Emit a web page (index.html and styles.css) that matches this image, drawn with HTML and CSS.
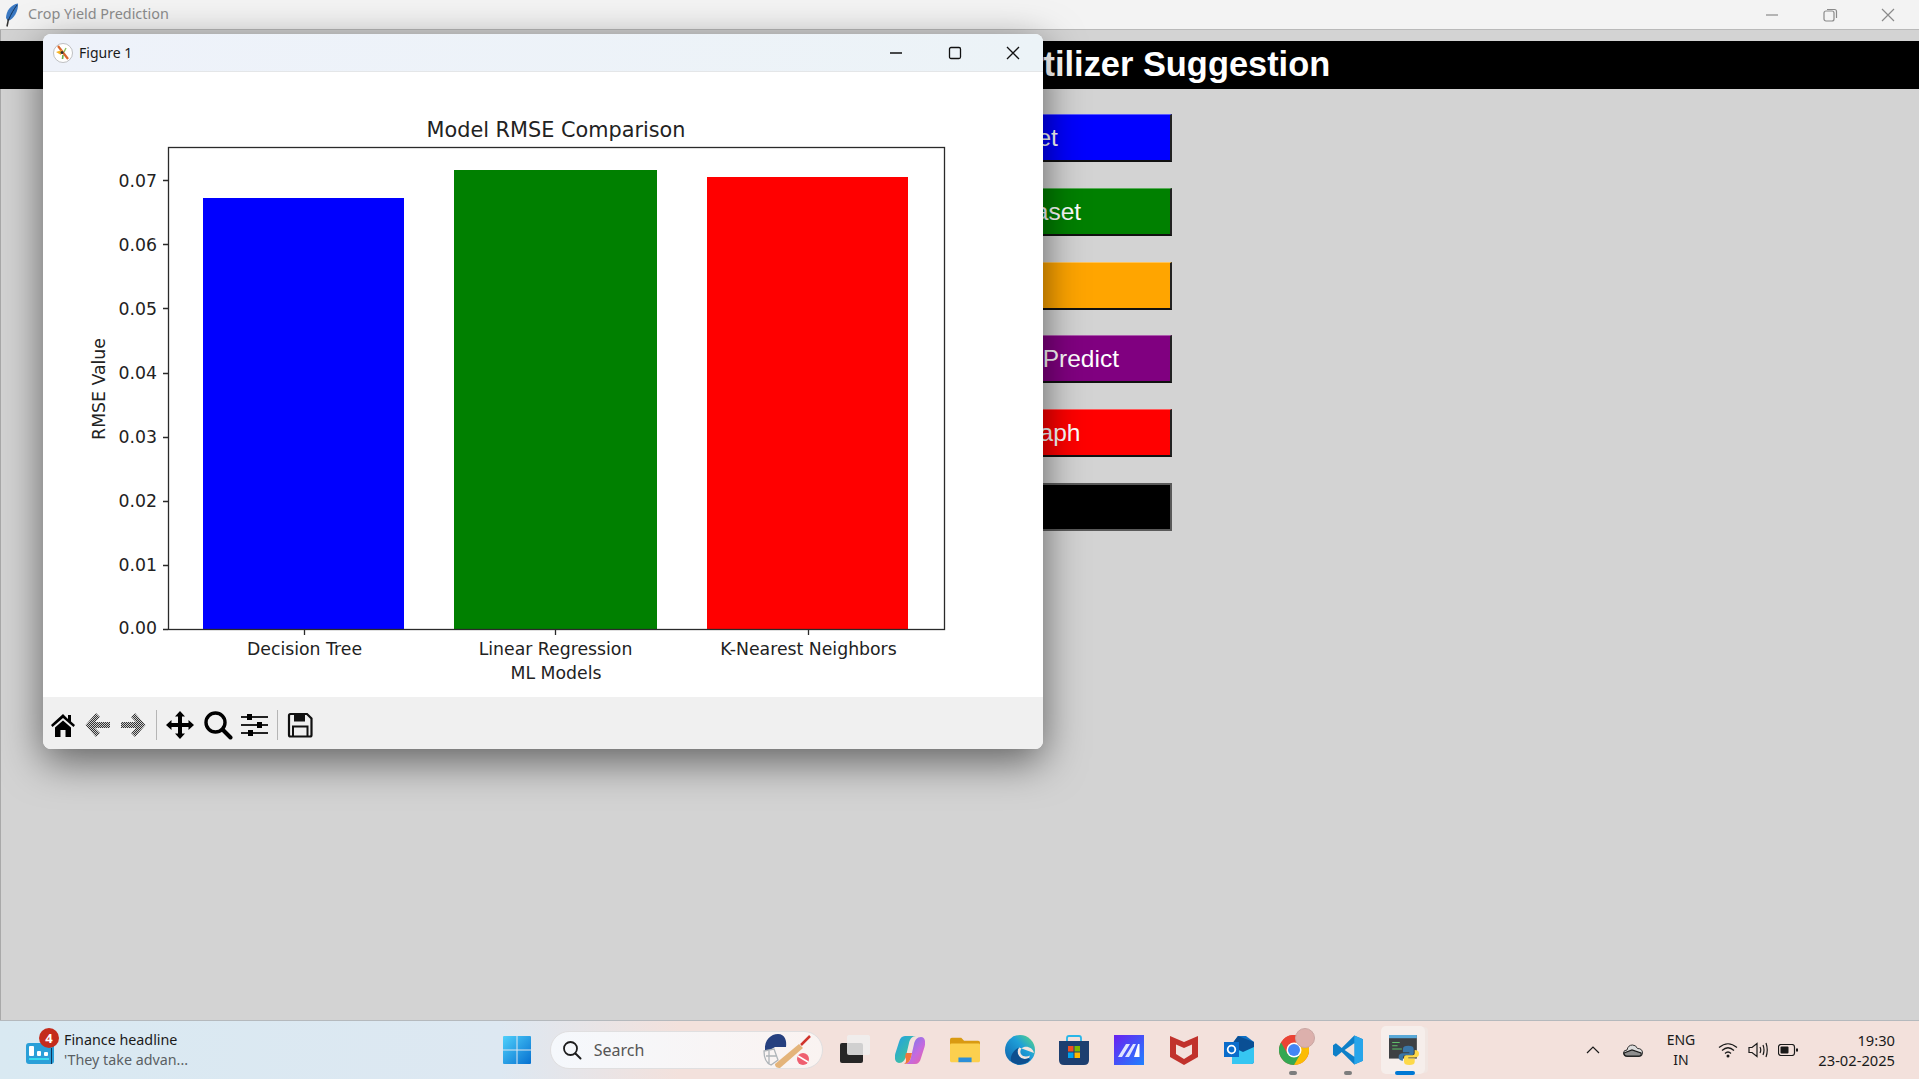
FILE: index.html
```html
<!DOCTYPE html>
<html lang="en">
	<head>
		<meta charset="UTF-8" />
		<meta name="viewport" content="width=device-width, initial-scale=1.0" />
		<title>Crop Yield Prediction</title>
		<link rel="stylesheet" href="styles.css">
	</head>
	<body>
		<!-- Main tkinter window -->
		<div class="app-titlebar">
			<svg class="feather" viewBox="0 0 14 24">
				<path d="M13 0.500C6 1.500 1 8 1 15L3 18C9 16 13.500 8 13 0.500Z" fill="#3a78c2" />
				<path d="M12 2C9 6 6 11 3.500 17" stroke="#16365c" stroke-width="1" fill="none" />
				<path d="M3.500 16L2 23.500" stroke="#333" stroke-width="1.500" fill="none" />
			</svg>
			<span class="app-name">Crop Yield Prediction</span>
			<div class="app-controls">
				<svg viewBox="0 0 16 16"><path d="M2 8H14" /></svg>
				<svg viewBox="0 0 16 16"><rect x="2" y="4" width="10" height="10" rx="2" /><path d="M5 2.500H12.500Q14.500 2.500 14.500 4.500V11" /></svg>
				<svg viewBox="0 0 16 16"><path d="M2 2L14 14M14 2L2 14" /></svg>
			</div>
		</div>

		<div class="app-body">
			<div class="app-header">Crop Yield Prediction and Fertilizer Suggestion</div>
			<div class="actions">
				<button class="action blue">Upload Dataset</button>
				<button class="action green">Preprocess Dataset</button>
				<button class="action orange">Split Data</button>
				<button class="action purple">Train ML Models to Predict</button>
				<button class="action red">Show RMSE Graph</button>
				<button class="action black">Exit</button>
			</div>

			<!-- Matplotlib window on top -->
			<div class="figure-window">
				<div class="figure-titlebar">
					<svg class="figure-icon" viewBox="0 0 20 20">
						<circle cx="10" cy="10" r="9.500" fill="#fff" stroke="#999" stroke-width="0.600" />
						<path d="M5 3L15 16" stroke="#d9652a" stroke-width="2.200" />
						<path d="M3 9L9 7L8 12Z" fill="#f5b324" />
						<path d="M10 12L9.500 16" stroke="#6bb04a" stroke-width="1.600" />
						<path d="M13 5L11 9" stroke="#8fbf5a" stroke-width="1.400" />
						<circle cx="9" cy="9.500" r="1.500" fill="#333" />
					</svg>
					<span class="figure-name">Figure 1</span>
					<div class="figure-controls">
						<svg viewBox="0 0 14 14"><path d="M1 7H13" /></svg>
						<svg viewBox="0 0 14 14"><rect x="1.500" y="1.500" width="11" height="11" rx="1.500" /></svg>
						<svg viewBox="0 0 14 14"><path d="M1 1L13 13M13 1L1 13" /></svg>
					</div>
				</div>

				<svg class="chart" viewBox="43 72 1000 625">
					<rect x="203" y="198" width="201" height="431" fill="#0000ff" />
					<rect x="454" y="170" width="203" height="459" fill="#008000" />
					<rect x="707" y="177" width="201" height="452" fill="#ff0000" />
					<rect x="168.500" y="147.500" width="776" height="482" class="axes" />
					<path class="axes" d="M163 629.500H168M163 565.500H168M163 501.500H168M163 437.500H168M163 373.500H168M163 308.500H168M163 244.500H168M163 180.500H168M304.500 630V635M555.500 630V635M808.500 630V635" />
					<text class="chart-title" x="556" y="136.500">Model RMSE Comparison</text>
					<text class="tick-y" x="157" y="634">0.00</text>
					<text class="tick-y" x="157" y="570.500">0.01</text>
					<text class="tick-y" x="157" y="506.500">0.02</text>
					<text class="tick-y" x="157" y="442.500">0.03</text>
					<text class="tick-y" x="157" y="379">0.04</text>
					<text class="tick-y" x="157" y="315">0.05</text>
					<text class="tick-y" x="157" y="251">0.06</text>
					<text class="tick-y" x="157" y="187">0.07</text>
					<text class="tick-x" x="304.500" y="654.500">Decision Tree</text>
					<text class="tick-x" x="555.500" y="654.500">Linear Regression</text>
					<text class="tick-x" x="808.500" y="654.500">K-Nearest Neighbors</text>
					<text class="tick-x" x="556" y="678.500">ML Models</text>
					<text class="tick-x" transform="translate(105 389) rotate(-90)">RMSE Value</text>
				</svg>

				<div class="figure-toolbar">
					<svg class="tool" viewBox="0 0 26 26">
						<path d="M13 2L1 13L2.500 15L13 6L23.500 15L25 13L21 9.500V3H18V7Z" fill="#000" />
						<path d="M5 15.500L13 8.500L21 15.500V25H15.500V18H10.500V25H5Z" fill="#000" />
					</svg>
					<svg class="tool tool-nudge" viewBox="0 0 26 26">
						<defs>
							<pattern id="dither" width="2" height="2" patternUnits="userSpaceOnUse">
								<rect width="2" height="2" fill="#cfcfcf" />
								<rect width="1" height="1" fill="#333" />
								<rect x="1" y="1" width="1" height="1" fill="#333" />
							</pattern>
						</defs>
						<path d="M11 1L0.500 13L11 25L15 21L10 16H25V10H10L15 5Z" fill="url(#dither)" />
					</svg>
					<svg class="tool tool-nudge" viewBox="0 0 26 26">
						<path d="M15 1L25.500 13L15 25L11 21L16 16H1V10H16L11 5Z" fill="url(#dither)" />
					</svg>
					<span class="tool-sep sep-first"></span>
					<svg class="tool-wide" viewBox="0 0 30 30">
						<path d="M15 1L20 6.500H17V13H23.500V10L29 15L23.500 20V17H17V23.500H20L15 29L10 23.500H13V17H6.500V20L1 15L6.500 10V13H13V6.500H10Z" fill="#000" />
					</svg>
					<svg class="tool-wide" viewBox="0 0 30 30">
						<circle cx="12.500" cy="12.500" r="9.500" fill="none" stroke="#000" stroke-width="3.400" />
						<path d="M19.500 19.500L27.500 27.500" stroke="#000" stroke-width="4" stroke-linecap="round" />
					</svg>
					<svg class="tool-wide" viewBox="0 0 30 30">
						<path d="M0 7H27M0 15H27M0 23H27" stroke="#222" stroke-width="1.800" />
						<rect x="6" y="4" width="5" height="6" fill="#000" />
						<rect x="16" y="12" width="5" height="6" fill="#000" />
						<rect x="7" y="20" width="5" height="6" fill="#000" />
					</svg>
					<span class="tool-sep sep-second"></span>
					<svg class="tool tool-nudge" viewBox="0 0 26 26">
						<path d="M2 3.500Q2 2 3.500 2H20L24.500 6.500V23Q24.500 24.500 23 24.500H3.500Q2 24.500 2 23Z" fill="none" stroke="#111" stroke-width="2.200" />
						<path d="M7 2.500V9.500H18V2.500" fill="#111" />
						<path d="M6 24V14.500H20.500V24" fill="none" stroke="#111" stroke-width="2" />
					</svg>
				</div>
			</div>
		</div>

		<!-- Windows taskbar -->
		<div class="taskbar">
			<div class="news">
				<div class="news-icon">
					<svg viewBox="0 0 28 21">
						<rect width="28" height="21" rx="3" fill="#2a9fd8" />
						<rect x="3" y="3" width="5" height="10" rx="1" fill="#fff" />
						<rect x="11" y="8" width="4" height="5" rx="1" fill="#fff" />
						<rect x="18" y="9" width="4" height="4" rx="1" fill="#fff" />
						<rect x="3" y="15" width="20" height="2" fill="#39dbf0" />
						<rect x="25" y="5" width="1" height="16" fill="#10365c" />
					</svg>
					<span class="news-badge">4</span>
				</div>
				<div class="news-text">
					<div class="news-head">Finance headline</div>
					<div class="news-sub">'They take advan...</div>
				</div>
			</div>

			<div class="task-cell">
				<svg class="task-icon" viewBox="0 0 30 30">
					<defs>
						<linearGradient id="win" x1="0" y1="0" x2="1" y2="1"><stop offset="0" stop-color="#4fd0fb" /><stop offset="1" stop-color="#0670d0" /></linearGradient>
					</defs>
					<path d="M1 2Q1 1 2 1H14.500V14.500H1ZM15.500 1H28Q29 1 29 2V14.500H15.500ZM1 15.500H14.500V29H2Q1 29 1 28ZM15.500 15.500H29V28Q29 29 28 29H15.500Z" fill="url(#win)" />
				</svg>
			</div>

			<div class="search-box">
				<svg class="search-glyph" viewBox="0 0 20 20">
					<circle cx="8.500" cy="8.500" r="6.500" fill="none" stroke="#1c1c1c" stroke-width="1.800" />
					<path d="M13.500 13.500L18.500 18.500" stroke="#1c1c1c" stroke-width="2" stroke-linecap="round" />
				</svg>
				<span class="search-text">Search</span>
				<svg class="search-art" viewBox="0 0 52 36">
					<path d="M4 18C3 8 10 2 17 2C24 2 26 9 25 15L14 15L9 18Z" fill="#26407f" />
					<path d="M3 19L13 17L17 28L10 33C5 31 3 25 3 19ZM5 24H15M8 19V32" fill="none" stroke="#aeb4b8" stroke-width="1.300" />
					<path d="M14 32L38 12L42 16L19 36C16 36 14 35 14 32Z" fill="#e4b47a" />
					<path d="M40 13L49 4" stroke="#d0342c" stroke-width="2.500" />
					<circle cx="42" cy="27" r="6" fill="#ef5f70" />
					<path d="M37 24L47 30" stroke="#fff" stroke-width="1.500" />
				</svg>
			</div>

			<div class="task-cell">
				<svg class="task-icon" viewBox="0 0 30 30">
					<rect x="0" y="8" width="23" height="20" rx="2" fill="#262626" />
					<rect x="7" y="0" width="23" height="20" rx="2" fill="#eeeeee" fill-opacity="0.850" />
				</svg>
			</div>
			<div class="task-cell">
				<svg class="task-icon" viewBox="0 0 30 30">
					<defs>
						<linearGradient id="cop-a" x1="0" y1="0" x2="1" y2="1"><stop offset="0" stop-color="#1f9fe8" /><stop offset="0.700" stop-color="#3fc0a0" /><stop offset="1" stop-color="#b8d83a" /></linearGradient>
						<linearGradient id="cop-b" x1="0" y1="0" x2="1" y2="1"><stop offset="0" stop-color="#5f7cf0" /><stop offset="0.600" stop-color="#c46ae0" /><stop offset="1" stop-color="#f0609a" /></linearGradient>
					</defs>
					<path d="M10 1H21C17 1 15 4 14 8L11 21C10 25 8 28 4 28C0 28 -1 23 0.500 18L4 7C5 3 7 1 10 1Z" fill="url(#cop-a)" />
					<path d="M20 29H9C13 29 15 26 16 22L19 9C20 5 22 2 26 2C30 2 31 7 29.500 12L26 23C25 27 23 29 20 29Z" fill="url(#cop-b)" />
					<path d="M9 29C13 29 15 26 16 22L17 18H11L10 22C12 25 11 28 9 29Z" fill="#f2763c" />
				</svg>
			</div>
			<div class="task-cell">
				<svg class="task-icon" viewBox="0 0 32 30">
					<path d="M0 4Q0 2 2 2H12L15 5H30Q32 5 32 7V10H0Z" fill="#d99a12" />
					<rect y="8" width="32" height="20" rx="1.500" fill="#fcd04e" />
					<rect x="9" y="23" width="14" height="5" fill="#2c8fd8" />
				</svg>
			</div>
			<div class="task-cell">
				<svg class="task-icon" viewBox="0 0 30 30">
					<defs>
						<linearGradient id="edge" x1="0" y1="1" x2="1" y2="0"><stop offset="0" stop-color="#0f5ea8" /><stop offset="0.600" stop-color="#1f9fd8" /><stop offset="1" stop-color="#5fdc7a" /></linearGradient>
					</defs>
					<circle cx="15" cy="15" r="15" fill="url(#edge)" />
					<path d="M29 18C28 13 23 11 19 12C16 13 14.500 16 16 19C18 22 22 22 25 20.500L24 23C20 25 16 24 14 21C12 18 12 15 14 12.500Z" fill="#f4e4de" />
					<path d="M6 26C10 30 20 31 25 25L24 23C20 25 16 24 14 21C12 18 12 15 14 12.500C9 15 5 20 6 26Z" fill="#0e4f8f" />
				</svg>
			</div>
			<div class="task-cell">
				<svg class="task-icon" viewBox="0 0 30 30">
					<path d="M8 6V3Q8 1 10 1H20Q22 1 22 3V6" fill="none" stroke="#29b6e8" stroke-width="1.800" />
					<path d="M0 6H30V25Q30 30 25 30H5Q0 30 0 25Z" fill="#1d3f70" />
					<rect x="9" y="11" width="5.500" height="5.500" fill="#f25022" />
					<rect x="15.500" y="11" width="5.500" height="5.500" fill="#7fba00" />
					<rect x="9" y="17.500" width="5.500" height="5.500" fill="#00a4ef" />
					<rect x="15.500" y="17.500" width="5.500" height="5.500" fill="#ffb900" />
				</svg>
			</div>
			<div class="task-cell">
				<svg class="task-icon" viewBox="0 0 30 30">
					<defs>
						<linearGradient id="ma" x1="0" y1="0" x2="1" y2="1"><stop offset="0" stop-color="#6a20f0" /><stop offset="1" stop-color="#1f82ff" /></linearGradient>
					</defs>
					<rect width="30" height="30" fill="url(#ma)" />
					<path d="M4 22L12 9H16L8 22ZM11 22L19 9H22L15 22Z" fill="#dfe4ff" />
					<path d="M20 22L24 9H25.500V22Z" fill="#fff" />
				</svg>
			</div>
			<div class="task-cell">
				<svg class="task-icon" viewBox="0 0 28 30">
					<path d="M0 1L14 7L28 1V22L14 30L0 22ZM6 9.500V19L14 24L22 19V9.500L14 13Z" fill="#c1322c" fill-rule="evenodd" />
				</svg>
			</div>
			<div class="task-cell">
				<svg class="task-icon" viewBox="0 0 30 28">
					<path d="M14 0H22L30 6V25Q30 28 27 28H8V8Z" fill="#0f6fc4" />
					<path d="M8 10H30V25Q30 28 27 28H8Z" fill="#36c6f2" />
					<path d="M14 0L30 6V11L19 16L8 11V8Z" fill="#0a4f94" />
					<rect y="6" width="15" height="15" fill="#0a6ccb" />
					<circle cx="7.500" cy="13.500" r="3.800" fill="none" stroke="#fff" stroke-width="1.800" />
				</svg>
			</div>
			<div class="task-cell dotted">
				<svg class="task-icon" viewBox="0 0 30 30">
					<circle cx="15" cy="15" r="15" fill="#ea4335" />
					<path d="M15 30A15 15 0 0 0 28 7.500H15Z" fill="#fbbc05" />
					<path d="M2 7.500A15 15 0 0 0 15 30L21.500 18.750L15 7.500Z" fill="#34a853" />
					<path d="M2 7.500A15 15 0 0 1 28 7.500H15L8.500 18.750Z" fill="#ea4335" />
					<circle cx="15" cy="15" r="7.500" fill="#fff" />
					<circle cx="15" cy="15" r="6" fill="#4285f4" />
				</svg>
				<span class="chrome-badge"></span>
			</div>
			<div class="task-cell dotted">
				<svg class="task-icon" viewBox="0 0 31 30">
					<path d="M22 0L31 4V26L22 30L9 17L3 22L0 20V10L3 8L9 13Z" fill="#0d7fc8" />
					<path d="M22 0L31 4V26L22 30Z" fill="#28a5ea" />
					<path d="M22 8V22L12 15Z" fill="#f1e3de" />
				</svg>
			</div>
			<div class="task-cell active">
				<svg class="task-icon" viewBox="0 0 28 28">
					<rect width="26" height="22" fill="#3d4043" />
					<rect width="26" height="3" fill="#59a9d8" />
					<path d="M3 7H10M3 10H8M3 13H12" stroke="#5fbf6a" stroke-width="1" />
					<path d="M18 10Q13 10 13 13V16H19V17H13Q9 17 9 20.500Q9 24 13 24V21Q13 19 15 19H21Q23 19 23 17V13Q23 10 18 10Z" fill="#3a76a8" />
					<path d="M19 28Q24 28 24 25V22H18V21H24Q28 21 28 17.500Q28 14 24 14V17Q24 19 22 19H16Q14 19 14 21V25Q14 28 19 28Z" fill="#fdd94a" />
				</svg>
			</div>

			<div class="tray">
				<svg class="tray-chevron" viewBox="0 0 14 8"><path d="M1 7L7 1L13 7" /></svg>
				<svg class="tray-cloud" viewBox="0 0 20 13">
					<path d="M4 12.500Q0.500 12.500 0.500 9Q0.500 6 4 6Q5 1 9.500 1Q13 1 14.500 4.500Q19.500 4.500 19.500 9Q19.500 12.500 16 12.500Z" fill="#dcdcdc" stroke="#333" stroke-width="1" />
					<path d="M1 9L9 6L18 9Q19 12 16 12H4Q1 12 1 9Z" fill="#8e8e8e" />
				</svg>
				<div class="tray-lang"><div>ENG</div><div>IN</div></div>
				<svg class="tray-wifi" viewBox="0 0 20 16">
					<path d="M1 5.500Q10 -2 19 5.500M4 8.500Q10 3 16 8.500M7 11.500Q10 8.500 13 11.500" />
					<circle cx="10" cy="14" r="1.500" fill="#1a1a1a" stroke="none" />
				</svg>
				<svg class="tray-speaker" viewBox="0 0 20 16">
					<path d="M1 5.500H4L9 1.500V14.500L4 10.500H1Z" />
					<path d="M12 5Q13.500 8 12 11M15 3Q17 8 15 13M18 1Q20.500 8 18 15" />
				</svg>
				<svg class="tray-battery" viewBox="0 0 20 12">
					<rect x="0.500" y="0.500" width="16" height="11" rx="2.500" />
					<rect x="2.500" y="2.500" width="8" height="7" rx="1" fill="#1a1a1a" stroke="none" />
					<rect x="18" y="4.500" width="2" height="3" fill="#1a1a1a" stroke="none" />
				</svg>
				<div class="tray-clock"><div>19:30</div><div>23-02-2025</div></div>
			</div>
		</div>
	</body>
</html>
```

FILE: styles.css
```css
html,
body {
	margin: 0;
	padding: 0;
}

body {
	width: 1919px;
	height: 1079px;
	overflow: hidden;
	display: flex;
	flex-direction: column;
	font-family: "Noto Sans", "Open Sans", sans-serif;
	background-color: #d3d3d3;
}

/* Main window title bar */
.app-titlebar {
	height: 29px;
	flex-shrink: 0;
	display: flex;
	align-items: center;
	background-color: #f3f3f3;
	border-bottom: 1px solid #b9b9b9;
}

.feather {
	width: 14px;
	height: 24px;
	margin-left: 5px;
}

.app-name {
	margin: 0 0 2px 9px;
	font-size: 14.4px;
	color: #8c8c8c;
}

.app-controls {
	margin-left: auto;
	display: flex;
	gap: 42px;
	padding-right: 23px;
}

.app-controls svg {
	width: 16px;
	height: 16px;
	fill: none;
	stroke: #8a8a8a;
	stroke-width: 1.2;
}

/* Main window content */
.app-body {
	position: relative;
	flex: 1;
	border-left: 1px solid #a9a9a9;
}

.app-header {
	margin: 11px 0 0 -1px;
	height: 48px;
	padding-left: 562px;
	line-height: 47px;
	background-color: #000;
	color: #fff;
	font-family: "Liberation Sans", Arial, sans-serif;
	font-size: 34.4px;
	font-weight: bold;
}

.actions {
	width: 396px;
	margin: 25px 0 0 775px;
	display: flex;
	flex-direction: column;
	gap: 25.8px;
}

.action {
	height: 48px;
	padding: 1px 0 0 1px;
	box-sizing: border-box;
	border: 0 solid #000;
	border-top: 1px solid rgba(255, 255, 255, 0.35);
	border-right: 2px solid #222;
	border-bottom: 2px solid #111;
	color: #fff;
	font-family: "Liberation Sans", Arial, sans-serif;
	font-size: 24.5px;
	white-space: nowrap;
}

.blue {
	background-color: #0000ff;
}

.green {
	background-color: #008000;
}

.orange {
	background-color: #ffa500;
}

.purple {
	background-color: #800080;
}

.red {
	background-color: #ff0000;
}

.action.black {
	background-color: #000;
	border: 2px solid #5a5a5a;
}

/* Figure window */
.figure-window {
	position: absolute;
	left: 42px;
	top: 4px;
	width: 1000px;
	height: 715px;
	display: flex;
	flex-direction: column;
	border-radius: 8px;
	overflow: hidden;
	background-color: #fff;
	box-shadow: 0 12px 42px rgba(0, 0, 0, 0.55);
}

.figure-titlebar {
	height: 38px;
	flex-shrink: 0;
	display: flex;
	align-items: center;
	background: linear-gradient(to right, #eef2fa, #ecf3f7);
	box-shadow: inset 0 -1px 0 #e4e6e8;
}

.figure-icon {
	width: 20px;
	height: 20px;
	margin-left: 10px;
}

.figure-name {
	margin: 0 0 2px 6px;
	font-size: 14px;
	color: #1a1a1a;
}

.figure-controls {
	margin-left: auto;
	display: flex;
	gap: 44.5px;
	padding-right: 23px;
}

.figure-controls svg {
	width: 14px;
	height: 14px;
	fill: none;
	stroke: #111;
	stroke-width: 1.3;
}

.chart {
	width: 1000px;
	height: 625px;
	flex-shrink: 0;
	display: block;
}

.axes {
	fill: none;
	stroke: #2a2a2a;
	stroke-width: 1.3;
}

.chart text {
	font-family: "DejaVu Sans", sans-serif;
	font-size: 17.3px;
	fill: #222;
}

.chart .chart-title {
	font-size: 20.8px;
	text-anchor: middle;
}

.tick-y {
	text-anchor: end;
}

.tick-x {
	text-anchor: middle;
}

.figure-toolbar {
	height: 52px;
	box-sizing: border-box;
	flex-shrink: 0;
	display: flex;
	align-items: center;
	padding: 3px 0 0 7px;
	gap: 8px;
	background-color: #f0f0f0;
}

.tool {
	width: 26px;
	height: 26px;
}

.tool-nudge {
	margin-left: 1px;
}

.tool-wide {
	width: 30px;
	height: 30px;
}

.tool-sep {
	width: 1px;
	height: 30px;
	background-color: #b5b5b5;
}

.sep-first {
	margin-left: 2px;
}

.sep-second {
	margin-left: -2px;
}

/* Taskbar */
.taskbar {
	height: 58px;
	flex-shrink: 0;
	display: flex;
	align-items: center;
	background: linear-gradient(to right, #d9e9f2 0, #dde8f2 500px, #f3e1dc 680px, #f3e1dc 100%);
	border-top: 1px solid #b5b9bd;
}

.news {
	width: 503px;
	box-sizing: border-box;
	padding-left: 26px;
	display: flex;
	align-items: center;
	margin-right: -13px;
}

.news-icon {
	position: relative;
	width: 28px;
	height: 21px;
	margin-top: 6px;
}

.news-icon svg {
	display: block;
	width: 28px;
	height: 21px;
}

.news-badge {
	position: absolute;
	left: 13px;
	top: -15px;
	width: 20px;
	height: 20px;
	border-radius: 50%;
	background-color: #c42b1c;
	color: #fff;
	font-size: 13px;
	font-weight: bold;
	line-height: 20px;
	text-align: center;
}

.news-text {
	margin-left: 10px;
	font-size: 14.3px;
	line-height: 20px;
}

.news-head {
	color: #1a1a1a;
}

.news-sub {
	color: #5a5f63;
}

.task-cell {
	position: relative;
	width: 54.8px;
	height: 48px;
	display: flex;
	align-items: center;
	justify-content: center;
	flex-shrink: 0;
}

.task-icon {
	width: 30px;
	height: 30px;
}

.dotted::after,
.active::after {
	content: "";
	position: absolute;
	bottom: -1px;
	left: 23px;
	width: 8px;
	height: 4px;
	border-radius: 2px;
	background-color: #7d7d7d;
}

.active {
	background-color: #f6eeeb;
	border-radius: 5px;
	box-shadow: 4px 0 0 -1px #f1e6e2;
	width: 44px;
	margin-left: 5px;
	padding-left: 2px;
	box-sizing: border-box;
}

.active::after {
	left: 14px;
	width: 20px;
	background-color: #0078d4;
}

.chrome-badge {
	position: absolute;
	top: 2px;
	right: 6px;
	width: 20px;
	height: 20px;
	border-radius: 50%;
	background-color: #dcb0ac;
	border: 1px solid #c9a6a3;
	box-sizing: border-box;
}

.search-box {
	width: 273px;
	height: 38px;
	margin: 0 5px 0 5px;
	box-sizing: border-box;
	display: flex;
	align-items: center;
	border-radius: 19px;
	border: 1px solid #e0dfe0;
	background: linear-gradient(to right, #f5f8fc, #faf3f1);
	flex-shrink: 0;
}

.search-glyph {
	width: 20px;
	height: 20px;
	margin-left: 11px;
}

.search-text {
	margin-left: 12px;
	font-size: 16px;
	color: #555;
}

.search-art {
	width: 52px;
	height: 36px;
	margin-left: auto;
	margin-right: 9px;
}

.tray {
	margin-left: auto;
	display: flex;
	align-items: center;
	padding-right: 24px;
	color: #1a1a1a;
	font-size: 14px;
	line-height: 20px;
}

.tray svg {
	fill: none;
	stroke: #1a1a1a;
	stroke-width: 1.2;
}

.tray-chevron {
	width: 14px;
	height: 8px;
	stroke-width: 1.6;
}

.tray-cloud {
	width: 20px;
	height: 13px;
	margin-left: 23px;
}

.tray-lang {
	width: 40px;
	margin-left: 18px;
	text-align: center;
}

.tray-wifi {
	width: 20px;
	height: 16px;
	margin-left: 17px;
}

.tray-speaker {
	width: 20px;
	height: 16px;
	margin-left: 10px;
}

.tray-battery {
	width: 20px;
	height: 12px;
	margin-left: 10px;
}

.tray-clock {
	width: 78px;
	margin-left: 19px;
	font-size: 14.7px;
	text-align: right;
}
```
